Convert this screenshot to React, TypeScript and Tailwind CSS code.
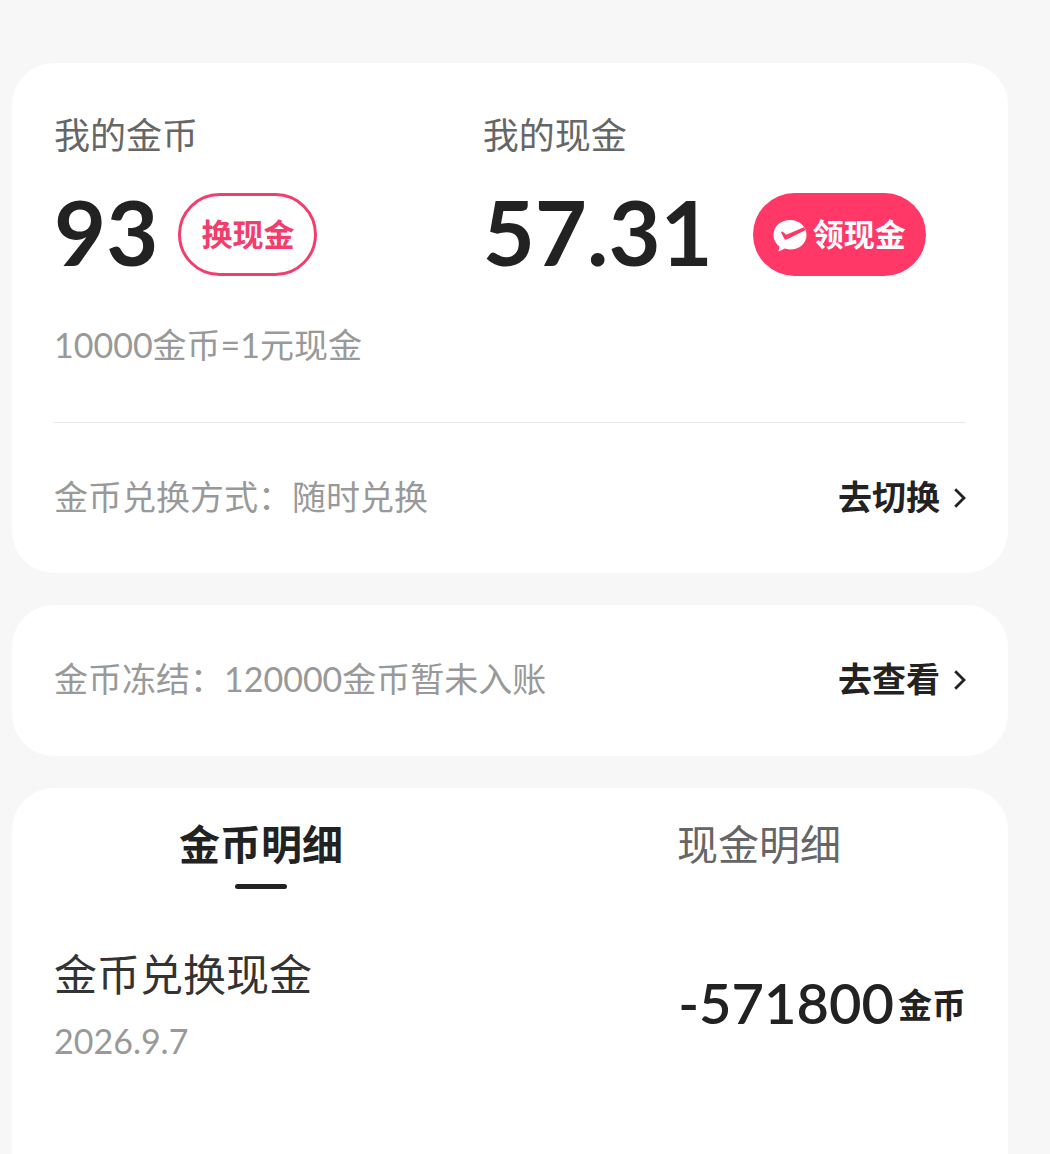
import React, { useState } from 'react';

const tabs = [
  { id: 'coins', name: '金币明细' },
  { id: 'cash', name: '现金明细' }
];

const records = [
  { id: 1, title: '金币兑换现金', date: '2026.9.7', amount: '-571800', unit: '金币' }
];

function ChevronIcon() {
  return (
    <svg viewBox="0 0 12 20" className="mt-[2px] w-[12px] h-[20px]" fill="none" stroke="#222" strokeWidth="2.8" aria-hidden="true">
      <path d="M1.200 1.200 10 10 1.200 18.800" />
    </svg>
  );
}

function CheckBubbleIcon() {
  return (
    <svg viewBox="0 0 34 34" className="w-[34px] h-[34px]" aria-hidden="true">
      <path
        fill="#fff"
        d="M17 2C7.600 2 .5 8.400 .5 17c0 5 2.300 8.800 5.800 11.500-.1 1.800-.3 3.200-1 4.700 2.600-.1 4.200-1.200 5.900-2.600 1.700.5 3.800.8 5.800.8 9.400 0 16.500-6 16.500-14.500S26.400 2 17 2Z"
      />
      <path fill="#ff3868" d="M8 14.200Q9 12.800 10.400 14.200L13.300 16.800 30.800 9.200 32.700 12 13.600 21.600Q12 22.200 11.200 20.600Z" />
    </svg>
  );
}

function MoreLink({ text }: { text: string }) {
  return (
    <a href="#" className="flex items-center gap-[14px] font-bold text-[#222]">
      {text}
      <ChevronIcon />
    </a>
  );
}

export default function App() {
  const [active, setActive] = useState('coins');

  return (
    <main className="min-h-screen flex flex-col gap-[32px] pt-[63px] pl-3 pr-[42px] bg-[#f7f7f7] text-[#222] font-[Lato,'Noto_Sans_CJK_SC',sans-serif]">
      <section className="rounded-[42px] bg-white px-[42px] pt-[52px] pb-[56px]">
        <div className="grid grid-cols-[47%_1fr]">
          <div>
            <h2 className="text-[36px] leading-[40px] text-[#666]">我的金币</h2>
            <div className="mt-[38px] flex items-start gap-[20px]">
              <span className="text-[90px] leading-[77px] font-bold">93</span>
              <button className="h-[83px] px-5 rounded-full border-3 border-[#f23d6d] text-[31px] font-bold text-[#f23d6d]">
                换现金
              </button>
            </div>
          </div>
          <div>
            <h2 className="text-[36px] leading-[40px] text-[#666]">我的现金</h2>
            <div className="mt-[38px] flex items-start gap-[40px]">
              <span className="text-[90px] leading-[77px] font-bold">57.31</span>
              <button className="h-[83px] px-5 flex items-center gap-[6px] rounded-full bg-[#ff3868] text-[31px] font-bold text-white">
                <CheckBubbleIcon />
                领现金
              </button>
            </div>
          </div>
        </div>
        <p className="mt-[49px] text-[34px] leading-[40px] text-[#999]">10000金币=1元现金</p>
        <div className="mt-[57px] pt-[54px] border-t border-[#e8e8e8] flex justify-between text-[34px] leading-[40px]">
          <p className="text-[#999]">金币兑换方式：随时兑换</p>
          <MoreLink text="去切换" />
        </div>
      </section>

      <section className="rounded-[42px] bg-white px-[42px] pt-[54px] pb-[57px] flex justify-between text-[34px] leading-[40px]">
        <p className="text-[#999]">金币冻结：120000金币暂未入账</p>
        <MoreLink text="去查看" />
      </section>

      <section className="flex-1 rounded-t-[42px] bg-white">
        <div role="tablist" className="grid grid-cols-2 pt-[32px]">
          {tabs.map((tab) => (
            <button
              key={tab.id}
              role="tab"
              aria-selected={active === tab.id}
              onClick={() => setActive(tab.id)}
              className={`flex flex-col items-center gap-[14px] text-[41px] leading-[50px] ${
                active === tab.id ? 'font-bold text-[#222]' : 'text-[#666]'
              }`}
            >
              {tab.name}
              {active === tab.id && <span className="w-[52px] h-[5px] rounded-full bg-[#222]" />}
            </button>
          ))}
        </div>
        <ul className="px-[42px] pt-[60px]">
          {records.map((record) => (
            <li key={record.id} className="flex items-center justify-between">
              <div>
                <h3 className="text-[43px] leading-[52px] text-[#333]">{record.title}</h3>
                <p className="mt-[20px] text-[34px] leading-[40px] text-[#999]">{record.date}</p>
              </div>
              <p className="flex items-start gap-1">
                <span className="text-[56px] leading-[56px] font-semibold">{record.amount}</span>
                <span className="text-[34px] leading-[60px] font-bold">{record.unit}</span>
              </p>
            </li>
          ))}
        </ul>
      </section>
    </main>
  );
}
